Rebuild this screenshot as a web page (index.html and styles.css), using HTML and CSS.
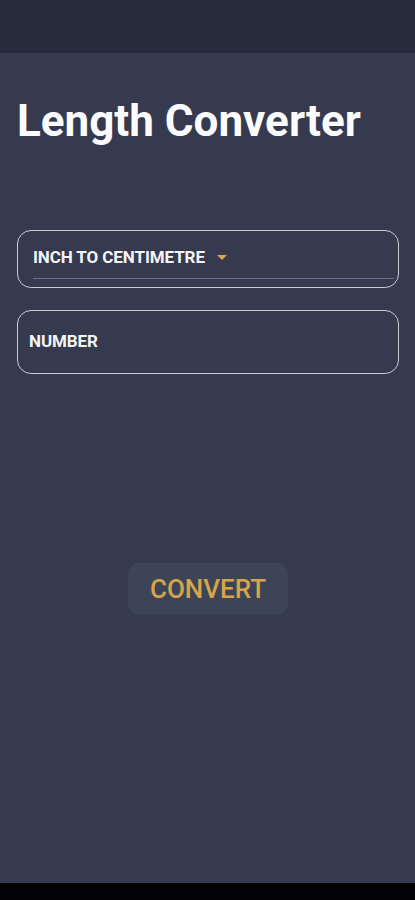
FILE: index.html
```html
<!DOCTYPE html>
<html>
<head>
<meta charset="utf-8">
<link rel="stylesheet" href="styles.css">
</head>
<body>
<div class="screen">
  <div class="statusbar"></div>
  <main class="content">
    <h1 class="title">Length Converter</h1>
    <div class="field select">
      <div class="select-row">
        <span class="select-label">INCH TO CENTIMETRE</span>
        <svg class="caret" width="10" height="5" viewBox="0 0 10 5"><path d="M0 0H10L5 5Z" fill="#d9a54c"/></svg>
      </div>
      <div class="select-line"></div>
    </div>
    <div class="field number">
      <span class="number-label">NUMBER</span>
    </div>
    <div class="btn-wrap">
      <button class="convert">CONVERT</button>
    </div>
  </main>
  <div class="navbar"></div>
</div>
</body>
</html>
```
FILE: styles.css
```css
* { box-sizing: border-box; }
html, body { margin: 0; padding: 0; }
body { background: #353a4f; font-family: Roboto, "Noto Sans", sans-serif; }
.screen { width: 415px; height: 900px; display: flex; flex-direction: column; }
.statusbar { height: 53px; background: #282b3c; flex: none; }
.content { flex: 1; background: #353a4f; padding: 42px 16px 0 17px; display: flex; flex-direction: column; }
.title { margin: 0; color: #fbfbfd; font-weight: 700; font-size: 44px; line-height: 52px; letter-spacing: 0; }
.field { border: 1.5px solid #c9cbd3; border-radius: 14px; width: 382px; }
.select { margin-top: 83px; height: 58px; padding: 14px 4px 0 15px; }
.select-row { display: flex; align-items: center; height: 24px; }
.select-label { color: #f4f4f7; font-weight: 700; font-size: 17px; letter-spacing: -0.1px; }
.caret { margin-left: 12px; margin-top: 1px; }
.select-line { height: 1px; background: #6b7084; margin-top: 9px; }
.number { margin-top: 22px; height: 64px; padding: 0 11px; display: flex; align-items: center; }
.number-label { color: #f4f4f7; font-weight: 700; font-size: 17px; letter-spacing: -0.1px; margin-top: -2px; }
.btn-wrap { display: flex; justify-content: center; margin-top: 189px; }
.convert { width: 160px; height: 51px; border: none; border-radius: 11px; background: #3e4458; color: #d6a449; font-family: Roboto, sans-serif; font-weight: 500; font-size: 26px; letter-spacing: 0; padding: 0; }
.navbar { height: 17px; background: #030305; flex: none; }
```
